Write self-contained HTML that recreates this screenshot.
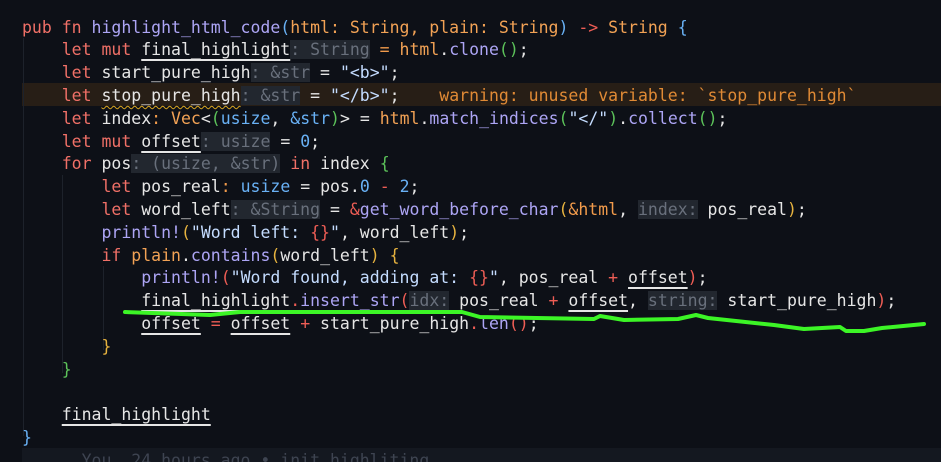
<!DOCTYPE html>
<html><head><meta charset="utf-8"><style>
html,body{margin:0;padding:0;background:#0d1017;width:941px;height:462px;overflow:hidden}
#c{position:relative;width:941px;height:462px;font-family:"DejaVu Sans Mono","Liberation Mono",monospace;font-size:16.5px;color:#e6e6e6}
.l{position:absolute;left:22px;height:22.8px;line-height:22.8px;white-space:pre}
.k{color:#f07067}.f{color:#ada5f5}.t{color:#f2a255}.b{color:#69b1f5}.s{color:#c4dcff}
.g{color:#5cc25a}.y{color:#e7b33f}.r{color:#ee5d55}.o{color:#f29b4b}.w{color:#e6e6e6}
.h{background:#22272f;color:#69707c}
.u{text-decoration:underline;text-decoration-color:#e6e6e6;text-underline-offset:4px;text-decoration-thickness:1.5px}
.sq{text-decoration:underline wavy #d9a520;text-underline-offset:4px;text-decoration-thickness:1px}
.guide{position:absolute;width:1px;background:#1d222b}
</style></head><body><div id="c">
<div style="position:absolute;left:22px;top:83px;width:919px;height:22.5px;background:#271e16"></div>
<div class="guide" style="left:23px;top:38px;height:398px"></div>
<div class="guide" style="left:62px;top:175px;height:198px"></div>
<div class="guide" style="left:103px;top:266px;height:84px"></div>
<div style="position:absolute;left:22px;top:448px;width:919px;height:14px;background:#141820"></div>

<div class="l" style="top:16.5px"><span class="k">pub fn </span><span class="f">highlight_html_code</span><span class="b">(</span><span class="t">html: String, plain: String</span><span class="b">)</span> <span class="r">-&gt;</span> <span class="t">String</span> <span class="b">{</span></div>
<div class="l" style="top:39.3px">    <span class="k">let mut </span><span class="u">final_highlight</span><span class="h">: String</span> <span class="o">=</span> <span class="t">html</span>.<span class="f">clone</span><span class="g">()</span>;</div>
<div class="l" style="top:62.1px">    <span class="k">let </span>start_pure_high<span class="h">: &amp;str</span> = <span class="s">"&lt;b&gt;"</span>;</div>
<div class="l" style="top:84.9px">    <span class="k">let </span><span class="sq">stop_pure_high</span><span class="h">: &amp;str</span> = <span class="s">"&lt;/b&gt;"</span>;    <span style="color:#e08a35">warning: unused variable: `stop_pure_high`</span></div>
<div class="l" style="top:107.7px">    <span class="k">let </span>index<span class="o">:</span> <span class="t">Vec</span>&lt;<span class="g">(</span><span class="b">usize</span>, <span class="b">&amp;str</span><span class="g">)</span>&gt; = <span class="t">html</span>.<span class="f">match_indices</span><span class="g">(</span><span class="s">"&lt;/"</span><span class="g">)</span>.<span class="f">collect</span><span class="g">()</span>;</div>
<div class="l" style="top:130.5px">    <span class="k">let mut </span><span class="u">offset</span><span class="h">: usize</span> = <span class="b">0</span>;</div>
<div class="l" style="top:153.3px">    <span class="k">for </span>pos<span class="h">: (usize, &amp;str)</span> <span class="k">in</span> index <span class="g">{</span></div>
<div class="l" style="top:176.1px">        <span class="k">let </span>pos_real<span class="o">:</span> <span class="b">usize</span> = pos.<span class="b">0</span> <span class="r">-</span> <span class="b">2</span>;</div>
<div class="l" style="top:198.9px">        <span class="k">let </span>word_left<span class="h">: &amp;String</span> = <span class="r">&amp;</span><span class="f">get_word_before_char</span><span class="y">(</span><span class="o">&amp;html</span>, <span class="h">index:</span> pos_real<span class="y">)</span>;</div>
<div class="l" style="top:221.7px">        <span class="f">println!</span><span class="y">(</span><span class="s">"Word left: <span class="r">{}</span>"</span>, word_left<span class="y">)</span>;</div>
<div class="l" style="top:244.5px">        <span class="k">if </span><span class="t">plain</span>.<span class="f">contains</span><span class="y">(</span>word_left<span class="y">)</span> <span class="y">{</span></div>
<div class="l" style="top:267.3px">            <span class="f">println!</span><span class="r">(</span><span class="s">"Word found, adding at: <span class="r">{}</span>"</span>, pos_real <span class="r">+</span> <span class="u">offset</span><span class="r">)</span>;</div>
<div class="l" style="top:290.1px">            <span class="u">final_highlight</span><span class="r">.</span><span class="f u" style="text-decoration-color:#ada5f5">insert_str</span><span class="r">(</span><span class="h">idx:</span> pos_real <span class="r">+</span> <span class="u">offset</span>, <span class="h">string:</span> start_pure_high<span class="r">)</span>;</div>
<div class="l" style="top:312.9px">            <span class="u">offset</span> <span class="r">=</span> <span class="u">offset</span> <span class="r">+</span> start_pure_high<span class="r">.</span><span class="f">len</span><span class="r">()</span>;</div>
<div class="l" style="top:335.7px">        <span class="y">}</span></div>
<div class="l" style="top:358.5px">    <span class="g">}</span></div>
<div class="l" style="top:404.1px">    <span class="u">final_highlight</span></div>
<div class="l" style="top:426.9px"><span class="b">}</span></div>
<div class="l" style="top:449.7px;color:#3e4451">      You, 24 hours ago • init highliting</div>

<svg style="position:absolute;left:0;top:0" width="941" height="462"><polyline fill="none" stroke="#3cf526" stroke-width="4" stroke-linejoin="round" stroke-linecap="round" points="125,312 210,315 240,312 462,312 480,317 594,319 600,316 624,320 678,319 696,315 708,318 774,325 804,329 840,327 846,331 864,331 882,328 924,324"/></svg>
</div></body></html>
